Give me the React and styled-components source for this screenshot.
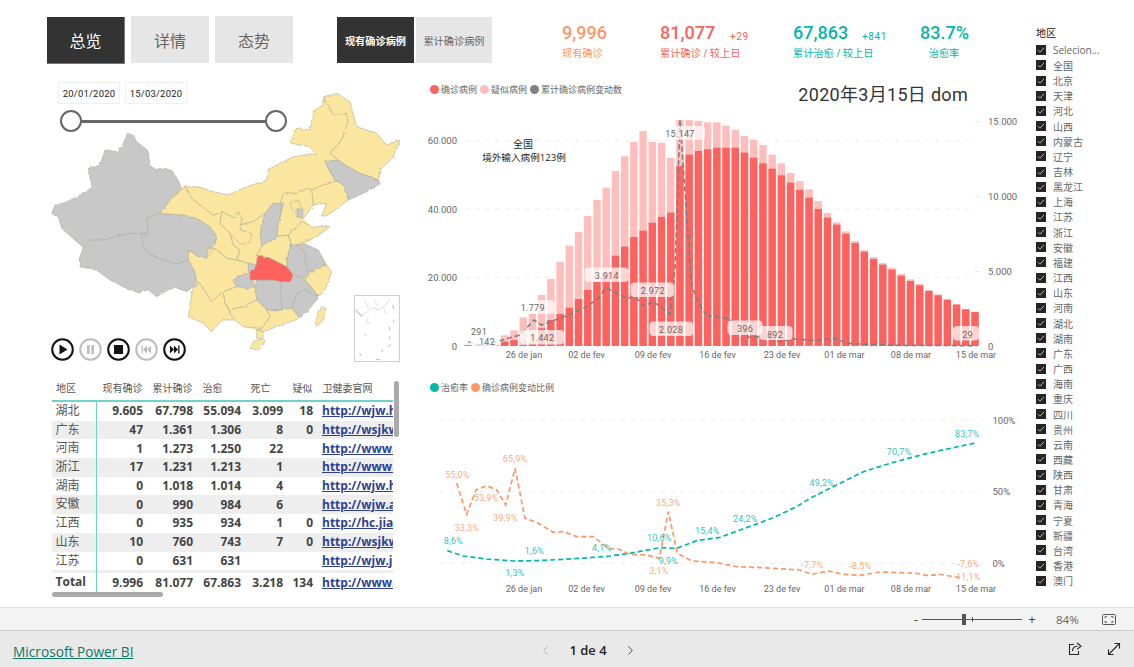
import styled, { createGlobalStyle } from "styled-components";
import { ChevronLeft, ChevronRight } from "lucide-react";

const CJK = `"Open Sans", "Noto Sans CJK SC", sans-serif`;
const DIN = `Roboto, "Noto Sans CJK SC", sans-serif`;

const RED = "#FD625E";
const PINK = "#FFBDBB";
const GREY = "#7F7F7F";
const TEAL = "#01B8AA";
const ORANGE = "#FE9666";

const GlobalStyle = createGlobalStyle`
  html, body { margin: 0; padding: 0; background: #fff; }
  body { font-family: ${CJK}; overflow: hidden; }
`;

const Page = styled.div`
  width: 1134px;
  height: 667px;
  display: flex;
  flex-direction: column;
  overflow: hidden;
`;

const Report = styled.div`
  height: 607px;
  display: flex;
  padding-left: 47px;
  box-sizing: border-box;
`;

const Main = styled.div`
  width: 989px;
  display: flex;
  flex-direction: column;
`;

const TopRow = styled.div`
  height: 84px;
  padding-top: 16px;
  box-sizing: border-box;
  display: flex;
  align-items: flex-start;
`;

const Tabs = styled.div`
  display: flex;
  gap: 6px;
  width: 290px;
`;

const Tab = styled.div`
  width: 78px;
  height: 47px;
  display: flex;
  align-items: center;
  justify-content: center;
  font-size: 16px;
  background: ${(p) => (p.$on ? "#333333" : "#E6E6E6")};
  color: ${(p) => (p.$on ? "#fff" : "#666")};
  ${(p) => p.$on && "margin-top: 1px; border-right: 1px solid #777; border-bottom: 1px solid #777; box-sizing: border-box;"}
`;

const Toggle = styled.div`
  display: flex;
  gap: 2px;
  margin-top: 1px;
  width: 225px;
`;

const ToggleBtn = styled.div`
  width: ${(p) => (p.$on ? "77px" : "76px")};
  height: 46px;
  display: flex;
  align-items: center;
  justify-content: center;
  font-size: 10.2px;
  font-weight: ${(p) => (p.$on ? 700 : 400)};
  background: ${(p) => (p.$on ? "#333333" : "#E6E6E6")};
  color: ${(p) => (p.$on ? "#fff" : "#666")};
  white-space: nowrap;
`;

const Kpi = styled.div`
  width: ${(p) => p.$w}px;
  margin-top: 5px;
  color: ${(p) => p.$color};
  text-align: ${(p) => (p.$center ? "center" : "left")};
  position: relative;
  white-space: nowrap;
`;

const KpiValue = styled.div`
  font-family: ${DIN};
  font-size: 18px;
  font-weight: 500;
  line-height: 24px;
`;

const KpiLabel = styled.div`
  font-size: 10.2px;
  line-height: 14px;
  margin-top: 1px;
`;

const KpiDelta = styled.span`
  position: absolute;
  left: ${(p) => p.$left}px;
  top: 10px;
  font-family: ${DIN};
  font-size: 10px;
  letter-spacing: 0.6px;
`;

const Body = styled.div`
  flex: 1;
  display: flex;
`;

const LeftCol = styled.div`
  width: 373px;
  display: flex;
  flex-direction: column;
`;

const MapArea = styled.div`
  position: relative;
  height: 291px;
`;

const MapSvg = styled.svg`
  display: block;
  margin-left: -7px;
  margin-top: 6px;
  width: 370px;
  height: 280px;
`;

const DateFilter = styled.div`
  position: absolute;
  left: 13px;
  top: -2px;
  width: 227px;
`;

const DateRow = styled.div`
  display: flex;
  gap: 5px;
  margin-left: -2px;
`;

const DateBox = styled.div`
  width: 62px;
  height: 22px;
  box-sizing: border-box;
  border: 1px solid #f0f0f0;
  font-family: ${DIN};
  font-size: 9.5px;
  letter-spacing: 0.2px;
  color: #222;
  display: flex;
  align-items: center;
  justify-content: center;
`;

const Slider = styled.div`
  margin-top: 6px;
  height: 22px;
  display: flex;
  align-items: center;
`;

const Handle = styled.div`
  width: 22px;
  height: 22px;
  box-sizing: border-box;
  border: 2px solid #666;
  border-radius: 50%;
  background: #fff;
  flex: none;
`;

const Track = styled.div`
  flex: 1;
  height: 3px;
  background: #666;
`;

const Controls = styled.div`
  position: absolute;
  left: 4px;
  top: 254px;
  display: flex;
  gap: 5px;
`;

const Inset = styled.svg`
  position: absolute;
  left: 307px;
  top: 211px;
  width: 46px;
  height: 67px;
  box-sizing: border-box;
  border: 1px solid #d0d0d0;
`;

const TableWrap = styled.div`
  position: relative;
  margin-left: 5px;
  width: 348px;
  height: 223px;
`;

const cols = "45px 50px 50px 48px 42px 30px 76px";

const HeadRow = styled.div`
  display: grid;
  grid-template-columns: ${cols};
  height: 19px;
  border-bottom: 2px solid #6fd3c9;
  width: 341px;
  font-size: 10px;
  color: #555;
  line-height: 15px;
  padding-top: 6px;
`;

const HeadCell = styled.div`
  padding-left: ${(p) => (p.$first ? "4px" : "5.5px")};
  white-space: nowrap;
  overflow: hidden;
`;

const Rows = styled.div`
  height: 171px;
  overflow: hidden;
  width: 341px;
`;

const Row = styled.div`
  display: grid;
  grid-template-columns: ${cols};
  height: 18.7px;
  background: ${(p) => (p.$alt ? "#EEEEEE" : "#fff")};
  align-items: center;
  line-height: 18px;
`;

const NameCell = styled.div`
  font-size: 12px;
  color: #555;
  padding-left: 3.5px;
  border-right: 1px solid #6fd3c9;
  height: 100%;
  box-sizing: border-box;
`;

const Num = styled.div`
  font-size: 12px;
  font-weight: 700;
  color: #444;
  text-align: right;
  padding-right: 4px;
`;

const Url = styled.div`
  font-size: 12px;
  font-weight: 700;
  color: #2f3f94;
  text-decoration: underline;
  padding-left: 5px;
  white-space: nowrap;
  overflow: hidden;
`;

const TotalRow = styled(Row)`
  height: 19px;
  width: 341px;
`;

const TotalName = styled(NameCell)`
  font-weight: 700;
  color: #444;
`;

const VBar = styled.div`
  position: absolute;
  left: 342px;
  top: 6px;
  width: 5px;
  height: 56px;
  border-radius: 3px;
  background: #aaa;
`;

const HBar = styled.div`
  position: absolute;
  left: 0;
  top: 217px;
  width: 111px;
  height: 5px;
  border-radius: 3px;
  background: #aaa;
`;

const ChartCol = styled.div`
  width: 600px;
  display: flex;
  flex-direction: column;
`;

const LegendRow = styled.div`
  display: flex;
  align-items: center;
  height: 14px;
  padding-left: 10px;
  gap: 3px;
  font-size: 9px;
  color: #666;
`;

const Dot = styled.span`
  width: 9px;
  height: 9px;
  border-radius: 50%;
  background: ${(p) => p.$color};
  margin-right: -1px;
`;

const TopChart = styled.div`
  position: relative;
  height: 278px;
  margin-top: -2px;
  margin-bottom: 20px;
`;

const DateTitle = styled.div`
  position: absolute;
  right: 52px;
  top: 1px;
  font-family: ${DIN};
  font-size: 18px;
  letter-spacing: 0.3px;
  color: #333;
  line-height: 24px;
`;

const ChartSvg = styled.svg`
  display: block;
  width: 600px;
  height: ${(p) => p.$h}px;
  text {
    font-family: ${DIN};
  }
`;

const Slicer = styled.div`
  flex: 1;
  padding-top: 26px;
  color: #666;
`;

const SlicerTitle = styled.div`
  font-size: 10px;
  color: #111;
  line-height: 14px;
  height: 16.7px;
`;

const SlicerItem = styled.div`
  display: flex;
  align-items: center;
  height: 15.17px;
  font-size: 10px;
  gap: 7px;
  white-space: nowrap;
`;

const Check = styled.span`
  width: 10px;
  height: 10px;
  background: #252423;
  display: flex;
  align-items: center;
  justify-content: center;
`;

const ZoomBar = styled.div`
  height: 23px;
  box-sizing: border-box;
  background: #f3f3f3;
  border-top: 1px solid #ddd;
  display: flex;
  align-items: center;
  padding-left: 913px;
  font-size: 11px;
  color: #666;
`;

const ZoomSign = styled.span`
  width: ${(p) => p.$w}px;
  font-size: 13px;
  color: #444;
  text-align: center;
`;

const ZoomTrack = styled.div`
  position: relative;
  width: 100px;
  height: 1px;
  background: #555;
  margin: 0 3px;
`;

const ZoomThumb = styled.span`
  position: absolute;
  left: 40px;
  top: -5px;
  width: 4px;
  height: 11px;
  background: #555;
`;

const ZoomTick = styled.span`
  position: absolute;
  left: 50px;
  top: -2px;
  width: 1px;
  height: 5px;
  background: #555;
`;

const ZoomValue = styled.span`
  margin-left: 17px;
  width: 46px;
  font-size: 11.5px;
`;

const Footer = styled.div`
  height: 37px;
  box-sizing: border-box;
  background: #e9e9e9;
  border-top: 1px solid #ccc;
  display: grid;
  grid-template-columns: 525px 100px 1fr;
  align-items: center;
  padding-left: 13px;
`;

const PbiLink = styled.a`
  font-family: "Open Sans", sans-serif;
  font-size: 13.7px;
  color: #117865;
  text-decoration: underline;
  margin-top: 4px;
`;

const Pager = styled.div`
  display: flex;
  align-items: center;
  justify-content: space-between;
  font-size: 13px;
  font-weight: 600;
  color: #252423;
  margin-top: 2px;
`;

const FooterIcons = styled.div`
  display: flex;
  justify-content: flex-end;
  align-items: center;
  gap: 25px;
  padding-right: 13px;
  margin-top: -1px;
`;

// zoomed crops were measured at 3x, this puts those numbers back on the page
const from3x = (pts, ox, oy) => pts.map(([x, y]) => [ox + x / 3, oy + y / 3]);
const toPath = (pts) => pts.map((p) => p.join(",")).join(" ");

// bar tops for every day 20/01 - 15/03, y in the 3x crop (708 = baseline)
const suspectTops = [704, 705, 703, 700, 676, 661, 622, 612, 555, 507, 456, 407, 366, 318, 270, 233, 183, 139, 96, 63, 96, 98, 144, 30, 30, 33, 37, 37, 47, 60, 78, 89, 105, 134, 160, 189, 213, 238, 273, 309, 337, 364, 393, 421, 441, 459, 474, 492, 508, 522, 540, 553, 568, 582, 597, 605];
const confirmedTops = [706, 706, 706, 706, 695, 690, 705, 700, 655, 630, 612, 593, 567, 540, 515, 490, 437, 410, 381, 362, 338, 321, 308, 168, 134, 123, 118, 113, 113, 113, 128, 143, 160, 176, 196, 218, 240, 263, 297, 323, 344, 371, 399, 425, 447, 464, 479, 497, 513, 526, 543, 556, 569, 584, 598, 606];

const changeLine = [
  ...from3x([[145, 695], [175, 705], [230, 695], [300, 675], [342, 630], [365, 645], [440, 617], [500, 590], [535, 565], [558, 533], [620, 565], [645, 560], [672, 588], [700, 575], [750, 612], [765, 480], [780, 30], [815, 530], [850, 605], [870, 618]], 420, 110),
  ...from3x([[25, 618], [80, 625], [130, 650], [145, 682], [190, 680], [240, 695], [280, 687], [350, 692], [405, 685], [440, 700], [500, 703], [600, 706], [830, 707]], 700, 110),
];

const barLabels = [
  { t: "15.147", x: 680, y: 137, box: [667, 126, 38, 14] },
  { t: "3.914", x: 606.7, y: 279, box: [584.5, 267.5, 44, 14.5] },
  { t: "2.972", x: 652.7, y: 293.5, box: [630.5, 282.5, 43.5, 14.5] },
  { t: "2.028", x: 671, y: 333, box: [649.5, 321.5, 43.5, 14.5] },
  { t: "1.779", x: 532.7, y: 311, box: [522, 300, 32.5, 14] },
  { t: "1.442", x: 542.3, y: 341, box: [520, 330, 44, 14.5] },
  { t: "291", x: 479, y: 334.5 },
  { t: "142", x: 487, y: 345, box: [470, 338, 30, 8] },
  { t: "396", x: 745, y: 332, box: [727.5, 320.5, 35, 14.5] },
  { t: "892", x: 775, y: 337.5, box: [759.5, 326, 33, 14] },
  { t: "29", x: 967.5, y: 337.5, box: [953, 326, 26, 14.5] },
];

const dayTicks = [
  ["26 de jan", 524], ["02 de fev", 586.5], ["09 de fev", 653], ["16 de fev", 717.5],
  ["23 de fev", 782], ["01 de mar", 844.5], ["08 de mar", 911], ["15 de mar", 976],
];

const teal = [
  ...from3x([[82, 527], [130, 543], [200, 552], [280, 558], [350, 557], [430, 553], [510, 548], [570, 543], [630, 535], [720, 518], [770, 520], [830, 497]], 420, 375),
  ...from3x([[0, 487], [60, 465], [110, 447], [160, 428], [230, 395], [270, 370], [340, 335], [430, 290], [520, 262], [610, 238], [700, 218], [770, 203]], 720, 375),
];

const orange = [
  ...from3x([[110, 325], [140, 418], [168, 345], [200, 332], [230, 345], [257, 390], [285, 280], [315, 430], [350, 442], [400, 472], [430, 470], [470, 485], [520, 485], [565, 520], [595, 522], [630, 538], [680, 540], [718, 550], [745, 410], [772, 535], [815, 558], [880, 562]], 420, 375),
  ...from3x([[0, 565], [50, 575], [130, 578], [240, 585], [275, 598], [325, 588], [370, 598], [420, 601], [480, 591], [590, 595], [625, 602], [660, 598], [720, 608]], 720, 375),
];

const rateLabels = [
  ["55,0%", 112, 298, ORANGE, 420], ["33,3%", 140, 458, ORANGE, 420], ["53,9%", 198, 368, ORANGE, 420],
  ["65,9%", 285, 252, ORANGE, 420], ["39,9%", 256, 428, ORANGE, 420], ["8,6%", 100, 497, TEAL, 420],
  ["1,6%", 343, 527, TEAL, 420], ["1,3%", 285, 592, TEAL, 420], ["4,1%", 545, 518, TEAL, 420],
  ["10,6%", 718, 488, TEAL, 420], ["35,3%", 745, 383, ORANGE, 420], ["9,9%", 745, 557, TEAL, 420],
  ["3,1%", 717, 588, ORANGE, 420], ["15,4%", 862, 467, TEAL, 420], ["24,2%", 76, 431, TEAL, 720],
  ["49,2%", 305, 323, TEAL, 720], ["70,7%", 537, 230, TEAL, 720], ["83,7%", 742, 176, TEAL, 720],
  ["-7,7%", 277, 569, ORANGE, 720], ["-8,5%", 421, 572, ORANGE, 720], ["-7,6%", 745, 566, ORANGE, 720],
  ["11,1%", 745, 605, ORANGE, 720],
];

const tableRows = [
  ["湖北", "9.605", "67.798", "55.094", "3.099", "18", "http://wjw.hubei.gov.cn/"],
  ["广东", "47", "1.361", "1.306", "8", "0", "http://wsjkw.gd.gov.cn/"],
  ["河南", "1", "1.273", "1.250", "22", "", "http://www.hnwsjsw.gov.cn/"],
  ["浙江", "17", "1.231", "1.213", "1", "", "http://www.zjwjw.gov.cn/"],
  ["湖南", "0", "1.018", "1.014", "4", "", "http://wjw.hunan.gov.cn/"],
  ["安徽", "0", "990", "984", "6", "", "http://wjw.ah.gov.cn/"],
  ["江西", "0", "935", "934", "1", "0", "http://hc.jiangxi.gov.cn/"],
  ["山东", "10", "760", "743", "7", "0", "http://wsjkw.shandong.gov.cn/"],
  ["江苏", "0", "631", "631", "", "", "http://wjw.jiangsu.gov.cn/"],
  ["", "", "", "", "", "", ""],
];

const regions = ["全国", "北京", "天津", "河北", "山西", "内蒙古", "辽宁", "吉林", "黑龙江", "上海", "江苏", "浙江", "安徽", "福建", "江西", "山东", "河南", "湖北", "湖南", "广东", "广西", "海南", "重庆", "四川", "贵州", "云南", "西藏", "陕西", "甘肃", "青海", "宁夏", "新疆", "台湾", "香港", "澳门"];

// province outlines, in the 3x crop of the map
const Y = "#FAE69E";
const G = "#C8C8C8";
const silhouette = "262,130 280,135 290,155 322,180 332,230 345,235 395,240 415,270 425,295 435,288 480,292 520,305 565,315 620,290 680,270 685,238 760,200 825,190 810,170 750,160 770,115 810,120 825,60 850,45 850,20 890,10 930,35 950,110 1010,130 1040,165 1080,150 1060,200 1020,240 1020,280 970,310 925,330 860,378 845,378 860,340 820,345 790,385 815,410 870,410 830,440 795,462 835,480 860,525 875,545 855,600 835,625 780,685 725,705 670,725 665,745 650,745 650,720 610,710 585,690 545,690 515,725 490,700 445,680 450,640 460,590 440,605 400,590 350,620 325,600 295,608 265,598 210,570 170,540 120,530 118,505 130,472 110,455 65,415 55,380 35,370 45,345 75,338 140,305 155,290 145,235 180,225 195,180 235,185 255,150";
const provinces = [
  [G, "262,130 280,135 290,155 322,180 332,230 345,235 395,240 415,270 425,300 395,325 360,370 320,385 325,430 265,430 195,450 150,450 130,472 110,455 65,415 55,380 35,370 45,345 75,338 140,305 155,290 145,235 180,225 195,180 235,185 255,150"],
  [G, "130,472 150,450 195,450 265,430 305,432 310,475 335,495 410,522 445,510 465,545 470,575 460,590 440,605 400,590 350,620 325,600 295,608 265,598 210,570 170,540 120,530 118,505"],
  [G, "320,385 360,370 430,375 470,385 510,410 530,440 525,465 505,480 500,505 475,500 445,480 445,510 410,522 335,495 310,475 305,432 325,430"],
  [Y, "360,370 395,325 425,300 435,288 455,325 480,345 520,375 545,365 540,400 570,430 580,465 600,480 590,510 560,505 525,475 505,480 525,465 530,440 510,410 470,385 430,375"],
  [Y, "435,288 480,292 520,305 565,315 620,290 680,270 685,238 760,200 825,190 810,170 750,160 770,115 810,120 825,60 850,45 855,20 880,75 920,70 925,95 905,150 870,190 895,210 855,215 885,270 815,300 800,295 770,310 730,310 720,345 700,340 675,370 640,395 600,405 595,365 585,385 545,365 520,375 480,345 455,325"],
  [Y, "850,20 890,10 930,35 950,110 1010,130 1040,165 1080,150 1060,200 1020,240 1015,270 960,250 915,225 895,210 870,190 905,150 925,95 920,70 880,75"],
  [G, "855,215 895,210 915,225 960,250 1015,270 1020,282 970,310 925,330 910,285 885,270"],
  [Y, "815,300 885,270 910,285 925,330 860,378 845,378 860,340 820,345"],
  [Y, "730,310 770,310 800,295 815,300 820,345 790,385 785,395 745,435 710,440 715,400 730,340 720,345"],
  [Y, "750,340 775,330 785,355 760,365"],
  [G, "772,355 790,358 787,385 770,380"],
  [G, "700,340 730,340 715,400 710,440 665,468 660,430 675,370"],
  [Y, "600,405 640,395 675,370 660,430 665,468 655,495 650,525 625,520 590,510 600,480 580,465 570,430 600,420"],
  [Y, "595,365 605,385 600,420 635,430 630,460 600,462 570,430 540,400 545,365 585,385"],
  [Y, "665,468 710,440 745,435 755,465 745,490 740,530 720,520 690,505 665,500 650,495"],
  [Y, "745,435 785,395 815,410 870,410 830,440 770,465 755,465"],
  [G, "745,490 755,465 770,465 795,490 800,540 815,545 795,565 765,555 740,530"],
  [G, "770,465 795,462 835,480 860,525 840,535 815,545 800,540 795,490"],
  [Y, "815,545 840,535 860,525 875,545 855,600 835,618 795,570"],
  [G, "795,600 835,618 835,625 780,685 755,655 770,610"],
  [G, "720,575 750,575 765,555 795,570 835,618 795,600 770,610 755,655 725,660 720,620"],
  [G, "650,570 700,570 720,575 725,660 680,660 650,630 645,600"],
  [Y, "445,480 475,500 500,505 525,475 560,505 590,510 625,520 625,545 580,570 590,590 550,605 515,635 480,580 470,575 465,545 445,510"],
  [G, "625,520 650,525 630,545 645,590 620,595 590,590 580,570 625,545"],
  [Y, "460,590 480,580 515,635 550,605 555,640 570,670 585,690 545,690 515,725 490,700 445,680 450,640"],
  [Y, "550,605 590,590 620,595 645,590 650,630 610,650 570,660 555,640"],
  [Y, "570,670 570,660 610,650 650,630 680,660 690,680 665,715 610,710 585,690"],
  [Y, "680,660 725,660 755,655 780,685 725,705 670,725 650,720 665,715 690,680"],
  [Y, "650,720 670,725 665,745 650,745"],
  [Y, "845,650 858,655 850,690 830,710 825,695"],
  [Y, "640,755 670,745 675,755 655,780 630,775"],
  [RED, "650,495 665,500 690,505 720,520 740,530 760,555 750,575 720,575 700,570 650,570 630,570 630,545 650,525"],
];

function BarChart() {
  const dayX = (i) => 467.9 + i * 9.22;
  return (
    <ChartSvg $h={264} viewBox="420 96 600 264">
      <defs>
        <clipPath id="plot">
          <rect x="420" y="120" width="600" height="240" />
        </clipPath>
      </defs>
      {[140.7, 209, 277.7].map((y) => (
        <line key={y} x1="465" x2="975" y1={y} y2={y} stroke="#eeeeee" strokeDasharray="5 5" />
      ))}
      {[121.5, 196.7, 271.5].map((y) => (
        <line key={y} x1="975" x2="979" y1={y} y2={y} stroke="#e4e4e4" />
      ))}
      <g clipPath="url(#plot)">
        {suspectTops.map((t, i) => (
          <rect key={i} x={dayX(i) - 3.7} y={110 + t / 3} width="7.4" height={(708 - t) / 3} fill={PINK} />
        ))}
        {confirmedTops.map((t, i) => (
          <rect key={i} x={dayX(i) - 3.7} y={110 + t / 3} width="7.4" height={(708 - t) / 3} fill={RED} />
        ))}
      </g>
      <polyline points={toPath(changeLine)} fill="none" stroke={GREY} strokeWidth="1.6" strokeDasharray="5 3" />
      {barLabels.map((l) => (
        <g key={l.t}>
          {l.box && <rect x={l.box[0]} y={l.box[1]} width={l.box[2]} height={l.box[3]} rx="4" fill="#fff" fillOpacity="0.72" />}
          <text x={l.x} y={l.y} textAnchor="middle" fontSize="9" fill="#666" letterSpacing="0.3">{l.t}</text>
        </g>
      ))}
      {[["60.000", 140.7], ["40.000", 209], ["20.000", 277.7], ["0", 346]].map(([t, y]) => (
        <text key={t} x="457" y={y + 3.5} textAnchor="end" fontSize="9.5" fill="#666">{t}</text>
      ))}
      {[["15.000", 121.5], ["10.000", 196.7], ["5.000", 271.5], ["0", 346]].map(([t, y]) => (
        <text key={t} x="988" y={y + 3.5} fontSize="9.5" fill="#666">{t}</text>
      ))}
      {dayTicks.map(([t, x]) => (
        <text key={t} x={x} y="358" textAnchor="middle" fontSize="9" fill="#666">{t}</text>
      ))}
      <text x="523" y="148" textAnchor="middle" fontSize="10" fill="#222" style={{ fontFamily: CJK }}>全国</text>
      <text x="524" y="160.5" textAnchor="middle" fontSize="9.6" fill="#222" style={{ fontFamily: CJK }}>境外输入病例123例</text>
    </ChartSvg>
  );
}

function RateChart() {
  return (
    <ChartSvg $h={208} viewBox="420 394 600 208">
      {[420, 491.7, 563.3].map((y) => (
        <line key={y} x1="440" x2="983" y1={y} y2={y} stroke="#eeeeee" strokeDasharray="5 5" />
      ))}
      <polyline points={toPath(teal)} fill="none" stroke={TEAL} strokeWidth="1.7" strokeDasharray="5 3" />
      <polyline points={toPath(orange)} fill="none" stroke={ORANGE} strokeWidth="1.7" strokeDasharray="5 3" />
      {rateLabels.map(([t, x, y, c, ox]) => (
        <text key={t} x={ox + x / 3} y={375 + y / 3 + 3.3} textAnchor="middle" fontSize="9" fill={c} fillOpacity="0.85" letterSpacing="0.2">{t}</text>
      ))}
      {[["100%", 420], ["50%", 491.7], ["0%", 563.3]].map(([t, y]) => (
        <text key={t} x="992.5" y={y + 3.5} fontSize="9.5" fill="#666">{t}</text>
      ))}
      {dayTicks.map(([t, x]) => (
        <text key={t} x={x} y="591.5" textAnchor="middle" fontSize="9" fill="#666">{t}</text>
      ))}
    </ChartSvg>
  );
}

function PlayButton({ off, children }) {
  const c = off ? "#bdbdbd" : "#111";
  return (
    <svg width="23" height="23" viewBox="0 0 23 23" fill={c} stroke="none">
      <circle cx="11.5" cy="11.5" r="10.3" fill="none" stroke={c} strokeWidth="2" />
      {children}
    </svg>
  );
}

function ChinaMap() {
  return (
    <MapArea>
      <MapSvg viewBox="0 0 1110 840">
        <defs>
          <filter id="rough" x="0" y="0" width="100%" height="100%">
            <feTurbulence type="fractalNoise" baseFrequency="0.07" numOctaves="2" seed="4" result="n" />
            <feDisplacementMap in="SourceGraphic" in2="n" scale="9" />
          </filter>
        </defs>
        <g filter="url(#rough)">
          <polygon points={silhouette} fill={Y} />
          {provinces.map(([fill, pts], i) => (
            <polygon key={i} points={pts} fill={fill} stroke="#a8a8a0" strokeWidth="1.6" strokeLinejoin="round" />
          ))}
        </g>
      </MapSvg>
      <DateFilter>
        <DateRow>
          <DateBox>20/01/2020</DateBox>
          <DateBox>15/03/2020</DateBox>
        </DateRow>
        <Slider>
          <Handle />
          <Track />
          <Handle />
        </Slider>
      </DateFilter>
      <Controls>
        <PlayButton><path d="M8.5 6.5 L16.5 11.5 L8.5 16.5 Z" /></PlayButton>
        <PlayButton off><path d="M8 7h2.6v9H8zM12.4 7H15v9h-2.6z" /></PlayButton>
        <PlayButton><rect x="7" y="7" width="9" height="9" /></PlayButton>
        <PlayButton off><path d="M6.5 7.5h1.3v8H6.5zM8 11.5l4-4v8zM12 11.5l4-4v8z" /></PlayButton>
        <PlayButton><path d="M16.5 7.5h-1.3v8h1.3zM15 11.5l-4-4v8zM11 11.5l-4-4v8z" /></PlayButton>
      </Controls>
      <Inset viewBox="0 0 46 67">
        <path d="M1 14 L6 20 L12 17 L18 12 L26 14 L33 8 L36 2 M10 4 L14 12 M20 3 L24 11 M30 12 L32 18 M14 22 L12 27 L16 28" fill="none" stroke="#d4d4d4" strokeWidth="0.8" />
        <path d="M1 14 L5 19 L8 21 M39 9 L41 13 M41 24 L40 27 M36 32 L36 35 M10 39 L12 41 M36 42 L36 45 M37 50 L35 53 M29 55 L28 58 M5 59 L6 62 M22 66 L26 66" fill="none" stroke="#999" strokeWidth="0.7" />
      </Inset>
    </MapArea>
  );
}

function CaseTable() {
  return (
    <TableWrap>
      <HeadRow>
        {["地区", "现有确诊", "累计确诊", "治愈", "死亡", "疑似", "卫健委官网"].map((h, i) => (
          <HeadCell key={h} $first={i === 0}>{h}</HeadCell>
        ))}
      </HeadRow>
      <Rows>
        {tableRows.map((r, i) => (
          <Row key={i} $alt={i % 2 === 1}>
            <NameCell>{r[0]}</NameCell>
            {r.slice(1, 6).map((n, j) => (
              <Num key={j}>{n}</Num>
            ))}
            <Url>{r[6]}</Url>
          </Row>
        ))}
      </Rows>
      <TotalRow>
        <TotalName>Total</TotalName>
        {["9.996", "81.077", "67.863", "3.218", "134"].map((n) => (
          <Num key={n}>{n}</Num>
        ))}
        <Url>http://www.nhc.gov.cn/</Url>
      </TotalRow>
      <VBar />
      <HBar />
    </TableWrap>
  );
}

function SlicerRow({ children }) {
  return (
    <SlicerItem>
      <Check>
        <svg width="8" height="8" viewBox="0 0 8 8">
          <path d="M1 4.2 L3 6.2 L7 1.8" fill="none" stroke="#b4b4b4" strokeWidth="1" />
        </svg>
      </Check>
      {children}
    </SlicerItem>
  );
}

export default function App() {
  return (
    <Page>
      <GlobalStyle />
      <Report>
        <Main>
          <TopRow>
            <Tabs>
              <Tab $on>总览</Tab>
              <Tab>详情</Tab>
              <Tab>态势</Tab>
            </Tabs>
            <Toggle>
              <ToggleBtn $on>现有确诊病例</ToggleBtn>
              <ToggleBtn>累计确诊病例</ToggleBtn>
            </Toggle>
            <Kpi $w={98} $color={ORANGE}>
              <KpiValue>9,996</KpiValue>
              <KpiLabel>现有确诊</KpiLabel>
            </Kpi>
            <Kpi $w={133} $color={RED}>
              <KpiValue>81,077</KpiValue>
              <KpiLabel>累计确诊 / 较上日</KpiLabel>
              <KpiDelta $left={70}>+29</KpiDelta>
            </Kpi>
            <Kpi $w={127} $color={TEAL}>
              <KpiValue>67,863</KpiValue>
              <KpiLabel>累计治愈 / 较上日</KpiLabel>
              <KpiDelta $left={69}>+841</KpiDelta>
            </Kpi>
            <Kpi $w={48} $color={TEAL} $center>
              <KpiValue>83.7%</KpiValue>
              <KpiLabel>治愈率</KpiLabel>
            </Kpi>
          </TopRow>
          <Body>
            <LeftCol>
              <ChinaMap />
              <CaseTable />
            </LeftCol>
            <ChartCol>
              <TopChart>
                <LegendRow>
                  <Dot $color={RED} />确诊病例
                  <Dot $color={PINK} />疑似病例
                  <Dot $color={GREY} />累计确诊病例变动数
                </LegendRow>
                <DateTitle>2020年3月15日 dom</DateTitle>
                <BarChart />
              </TopChart>
              <LegendRow>
                <Dot $color={TEAL} />治愈率
                <Dot $color={ORANGE} />确诊病例变动比例
              </LegendRow>
              <RateChart />
            </ChartCol>
          </Body>
        </Main>
        <Slicer>
          <SlicerTitle>地区</SlicerTitle>
          <SlicerRow>Selecion...</SlicerRow>
          {regions.map((r) => (
            <SlicerRow key={r}>{r}</SlicerRow>
          ))}
        </Slicer>
      </Report>
      <ZoomBar>
        <ZoomSign $w={6}>-</ZoomSign>
        <ZoomTrack>
          <ZoomThumb />
          <ZoomTick />
        </ZoomTrack>
        <ZoomSign $w={14}>+</ZoomSign>
        <ZoomValue>84%</ZoomValue>
        <svg width="14" height="11" viewBox="0 0 14 11" fill="none" stroke="#555">
          <rect x="0.5" y="0.5" width="13" height="10" rx="1" />
          <path d="M3 4V2.8h2M9 2.8h2V4M3 7v1.2h2M9 8.2h2V7" />
        </svg>
      </ZoomBar>
      <Footer>
        <PbiLink>Microsoft Power BI</PbiLink>
        <Pager>
          <ChevronLeft size={15} color="#aaa" strokeWidth={1.4} />
          1 de 4
          <ChevronRight size={15} color="#333" strokeWidth={1.4} />
        </Pager>
        <FooterIcons>
          <svg width="14" height="14" viewBox="0 0 14 14" fill="none" stroke="#252423" strokeWidth="1.1">
            <path d="M6 2.5H1.5v10h9V9" />
            <path d="M4.5 9c0-3.2 2-4.8 5-4.8M9 1l4 3.2L9 7.4" />
          </svg>
          <svg width="14" height="14" viewBox="0 0 14 14" fill="none" stroke="#252423" strokeWidth="1.1">
            <path d="M1.5 12.5L12.5 1.5M7.5 1.5h5v5M1.5 7.5v5h5" />
          </svg>
        </FooterIcons>
      </Footer>
    </Page>
  );
}
